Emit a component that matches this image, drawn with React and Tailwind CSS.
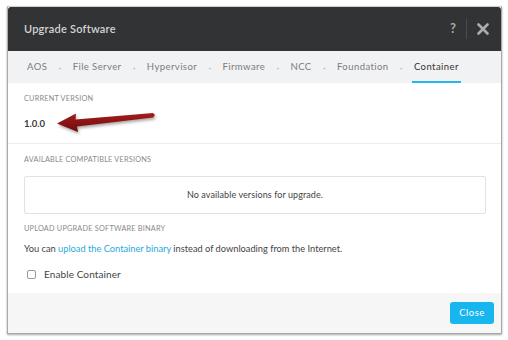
import React from "react";

const font = { fontFamily: "Lato, 'Open Sans', Arial, sans-serif" };

function Tab({ label, active }) {
  return (
    <div
      className={
        "h-full flex items-center px-[2px] border-b-2 shrink-0 " +
        (active ? "border-[#22b5ee] text-[#333]" : "border-transparent text-[#7c7c7c]")
      }
    >
      <span className="text-[9.5px] tracking-[0.045em] whitespace-nowrap pt-[2px]">{label}</span>
    </div>
  );
}

function Dot() {
  return <span className="text-[9px] text-[#aaa] px-[9.5px] pt-[2px]">·</span>;
}

export default function App() {
  const tabs = ["AOS", "File Server", "Hypervisor", "Firmware", "NCC", "Foundation", "Container"];
  return (
    <div className="w-[508px] h-[340px] bg-white relative overflow-hidden" style={font}>
      <div className="absolute left-[7px] top-[6px] w-[495px] h-[328px] border border-[#a8a8a8] border-t-[#d0d0d0] shadow-[0_1px_2px_rgba(0,0,0,0.35)] bg-white">
        <div className="flex flex-col h-full">
          {/* header */}
          <div className="h-[44px] bg-[#323334] rounded-t-[3px] flex items-center pl-[16px] pr-[12px]">
            <span className="text-[11px] font-semibold text-[#d4d4d4] tracking-[0.02em]">Upgrade Software</span>
            <div className="ml-auto flex items-center h-full">
              <span className="text-[13px] font-bold text-[#a9a9a9] pr-[10px]">?</span>
              <div className="w-px h-[20px] bg-[#4a4b4d]" />
              <svg width="12" height="12" viewBox="0 0 12 12" className="ml-[10px]">
                <path d="M1.5 1.5 L10.5 10.5 M10.5 1.5 L1.5 10.5" stroke="#acacac" strokeWidth="2.6" strokeLinecap="round" />
              </svg>
            </div>
          </div>
          {/* tabs */}
          <div className="h-[32px] bg-[#f1f2f4] flex items-stretch pl-[17px]">
            {tabs.map((t, i) => (
              <React.Fragment key={t}>
                {i > 0 && <div className="flex items-center shrink-0"><Dot /></div>}
                <Tab label={t} active={t === "Container"} />
              </React.Fragment>
            ))}
          </div>
          {/* body */}
          <div className="flex-1 flex flex-col">
            <div className="px-[16px] pt-[11px] pb-[12px] border-b border-[#ececec]">
              <div className="text-[7.3px] leading-[10px] text-[#8a8a8a] tracking-[0.03em]">CURRENT VERSION</div>
              <div className="mt-[13px] text-[9.5px] leading-[14px] font-bold text-[#3a3a3a]">1.0.0</div>
            </div>
            <div className="px-[16px] pt-[11px] pr-[15px]">
              <div className="text-[7.3px] leading-[10px] text-[#8a8a8a] tracking-[0.03em]">AVAILABLE COMPATIBLE VERSIONS</div>
              <div className="mt-[11px] h-[38px] border border-[#e2e2e2] rounded-[2px] flex items-center justify-center text-[9px] text-[#444] tracking-[0.01em]">
                No available versions for upgrade.
              </div>
              <div className="mt-[10px] text-[7.3px] leading-[10px] text-[#8a8a8a] tracking-[0.03em]">UPLOAD UPGRADE SOFTWARE BINARY</div>
              <div className="mt-[8px] text-[9.25px] leading-[14px] text-[#444]">
                You can <span className="text-[#29a9e0]">upload the Container binary</span> instead of downloading from the Internet.
              </div>
              <div className="mt-[11px] flex items-center h-[14px] pl-[3px]">
                <div className="w-[9px] h-[9px] border border-[#9a9a9a] rounded-[2px] bg-white" />
                <span className="ml-[8px] text-[10px] text-[#444] tracking-[0.01em]">Enable Container</span>
              </div>
            </div>
          </div>
          {/* footer */}
          <div className="h-[40px] bg-[#f6f6f6] flex items-center justify-end pr-[7px]">
            <button className="w-[44px] h-[22px] rounded-[3px] bg-[#17b6ef] text-white text-[9.5px] tracking-[0.05em]">Close</button>
          </div>
        </div>
      </div>
      {/* annotation arrow */}
      <svg className="absolute left-0 top-0" width="508" height="340" viewBox="0 0 508 340" style={{ filter: "drop-shadow(1px 2px 1.5px rgba(0,0,0,0.35))" }}>
        <defs>
          <linearGradient id="ag" x1="0" y1="0" x2="0" y2="1">
            <stop offset="0" stopColor="#a51d1d" />
            <stop offset="1" stopColor="#6f0a0a" />
          </linearGradient>
        </defs>
        <polygon
          points="57,123.5 76,113.5 75.5,119.5 153,113 155,115 153,117.5 77,126.5 78,132"
          fill="url(#ag)"
        />
      </svg>
    </div>
  );
}
